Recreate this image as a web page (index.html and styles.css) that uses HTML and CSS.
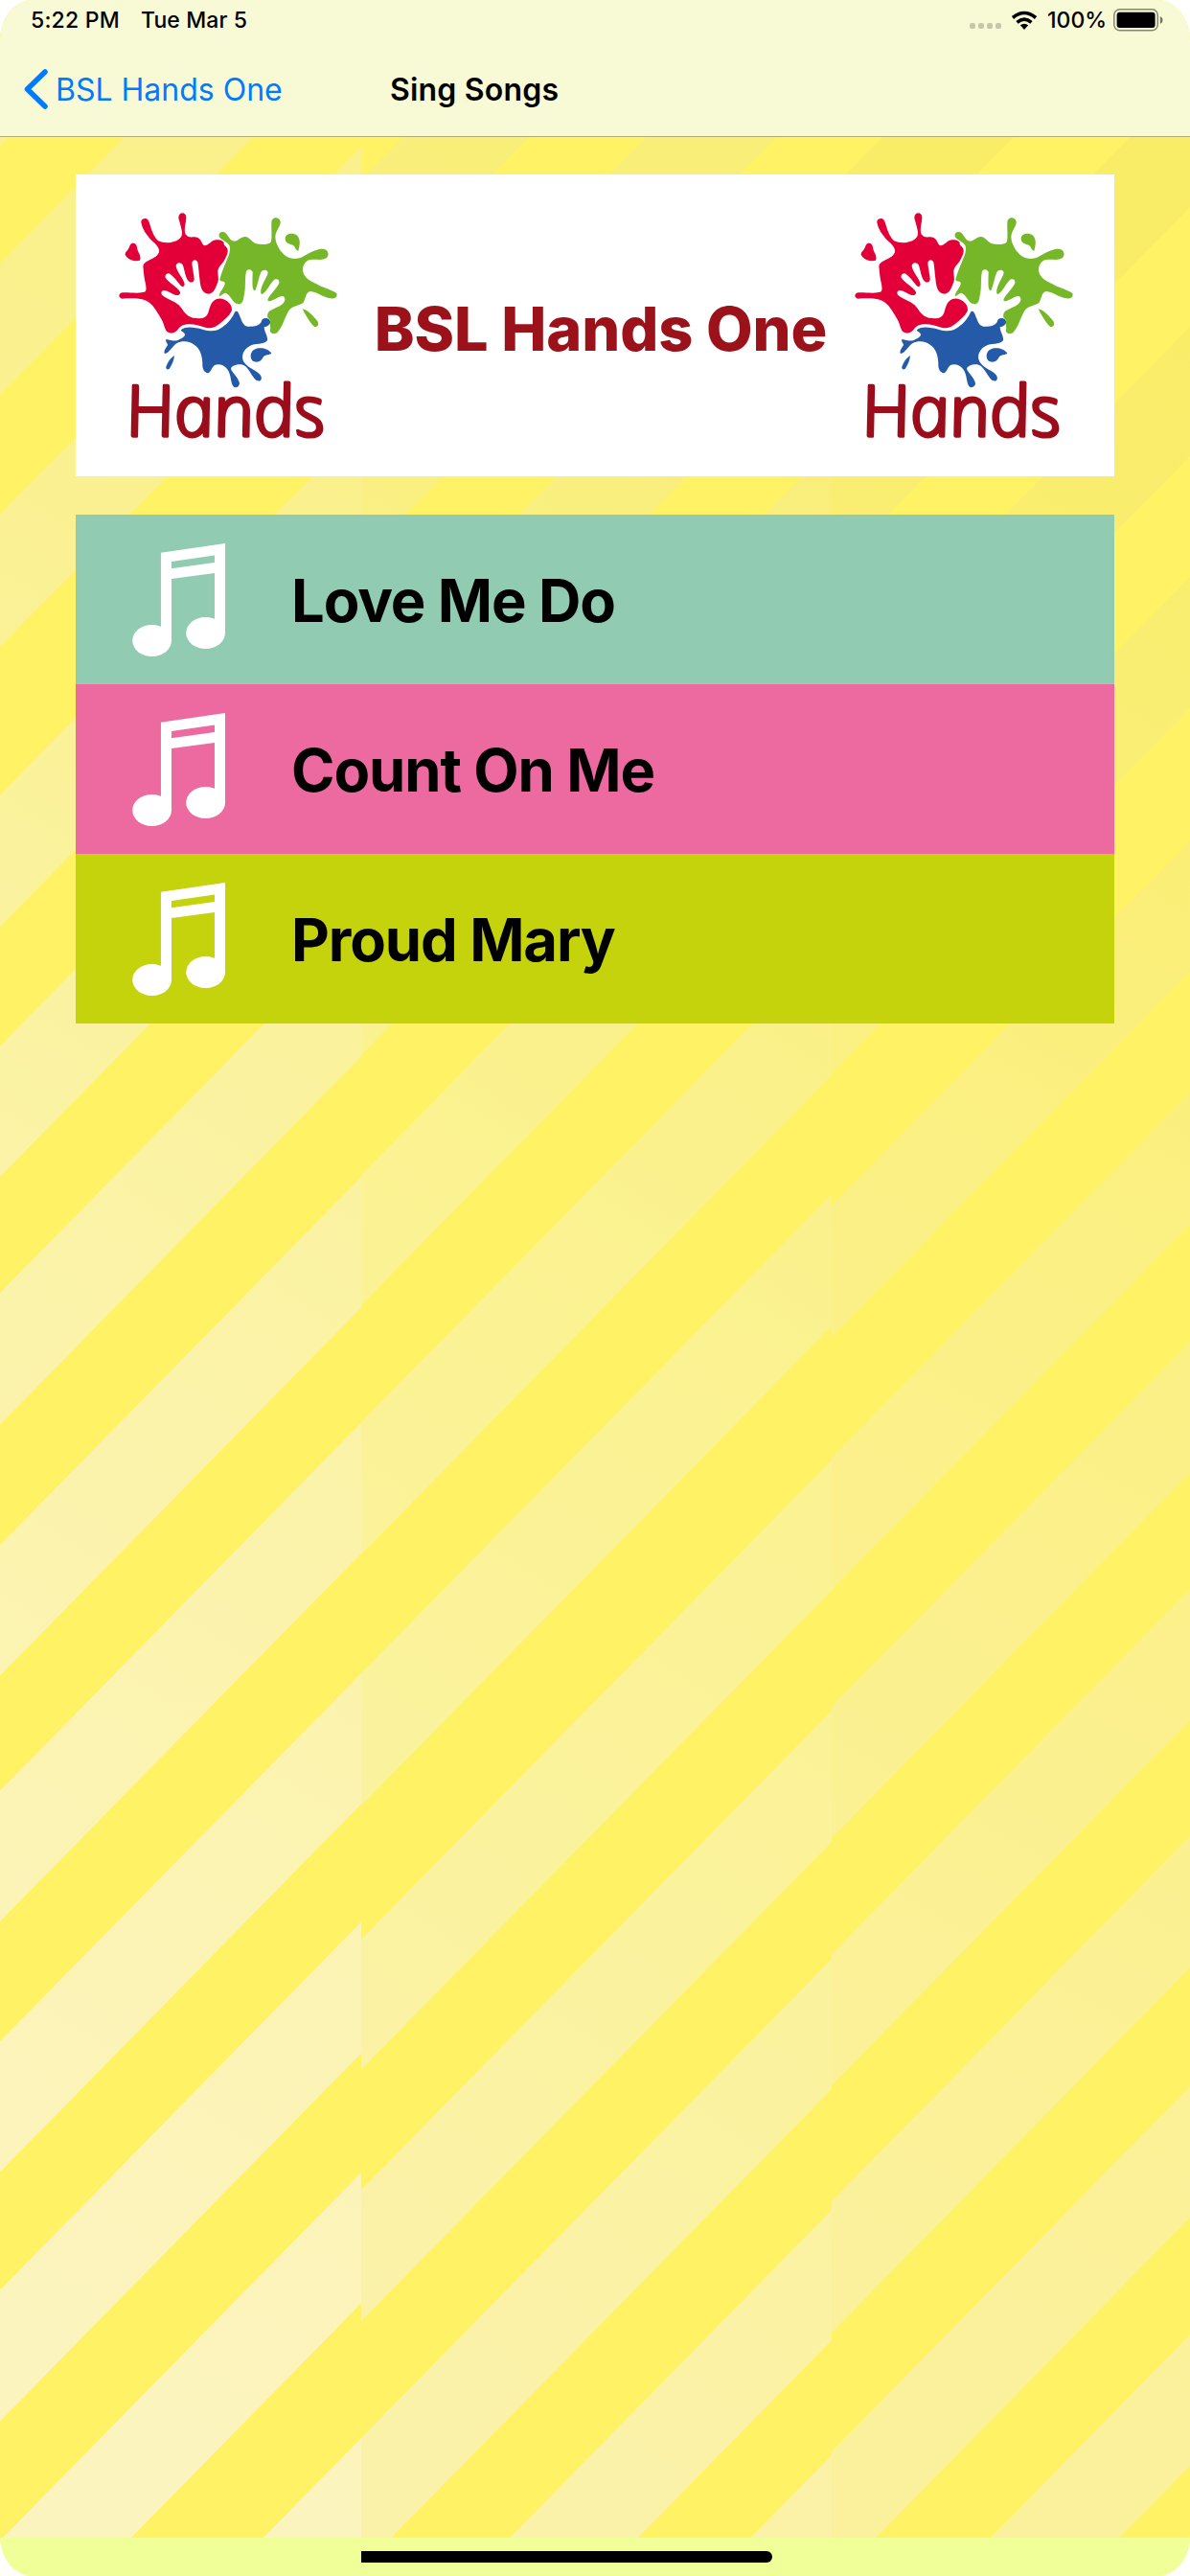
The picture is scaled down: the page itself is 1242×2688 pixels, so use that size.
FILE: index.html
```html
<!DOCTYPE html>
<html lang="en">
<head>
  <meta charset="UTF-8" />
  <meta name="viewport" content="width=device-width, initial-scale=1" />
  <title>Sing Songs</title>
  <link rel="stylesheet" href="styles.css">
</head>
<body>

  <!-- shared drawings -->
  <svg class="defs" width="0" height="0">
    <symbol id="note" viewBox="171 105 246 342" preserveAspectRatio="none">
      <path d="M247 133L417 105V376H389V195L275 212V399H247zM275 160V181L389 163V141z" fill-rule="evenodd" />
      <ellipse cx="223.3" cy="399" rx="51.7" ry="48" />
      <ellipse cx="365.3" cy="376" rx="51.7" ry="48" />
    </symbol>

    <symbol id="hands" viewBox="155 150 695 780" overflow="visible">
      <!-- red splash -->
      <path fill="#e30038" d="M231 187C229 176 244 169 252 178C262 195 262 222 284 244C306 254 338 250 352 236C366 225 356 203 348 173C346 152 374 151 372 173C371 190 362 212 372 226C382 238 398 228 408 234C422 242 420 255 429 259C446 257 449 242 467 241C478 241 486 242 490 250C488 260 500 261 502 272C503 285 497 295 489 309C481 320 470 327 471 344C472 360 475 365 469 378C463 393 458 409 442 410C421 409 416 386 414 362C411 342 411 325 408 311C404 300 391 301 390 314C391 331 397 350 397 365C394 377 383 376 376 366C368 352 366 331 361 319C354 308 340 312 340 323C342 340 366 365 367 380C365 389 359 389 354 383C344 371 333 355 321 347C312 343 304 351 307 359C314 373 345 388 353 404C354 413 347 416 337 413C326 409 315 401 304 399C294 398 292 407 296 413C306 423 335 432 348 444C362 458 363 468 379 479C393 488 420 489 431 482C447 472 440 448 458 432C474 419 490 425 502 434C512 442 517 454 514 464C506 479 490 492 476 504C462 515 448 520 433 515C409 508 390 502 368 506C354 508 349 519 340 527C330 535 315 534 309 525C302 512 301 498 293 487C280 464 267 441 247 431C226 422 192 424 171 425C158 422 160 408 172 406C191 404 225 411 244 403C252 391 239 365 239 343C237 321 233 318 252 307C266 299 282 294 287 279C288 263 277 255 265 244C247 225 235 207 231 187z" />
      <path fill="#e30038" d="M196 257C204 247 216 251 218 264C219 280 233 289 227 305C209 310 188 302 181 287C180 277 192 274 196 257z" />
      <!-- green splash -->
      <path fill="#76b72a" d="M475 229C472 219 482 213 491 217C503 222 505 239 517 244C533 249 541 230 558 231C574 235 576 247 591 253C608 257 628 256 636 249C642 239 638 213 639 188C638 168 664 167 667 184C669 197 653 211 651 230C651 253 667 280 685 292C701 303 724 302 740 292C759 281 775 271 797 269C817 268 822 288 811 298C794 309 770 297 752 306C737 315 734 332 740 348C748 364 764 371 784 381C805 393 827 397 842 407C849 418 837 427 825 424C798 421 784 404 760 402C745 406 747 426 738 438C722 449 704 446 693 463C680 485 674 513 658 530C649 538 635 534 634 525C638 518 633 508 635 497C638 487 623 491 627 473C630 461 648 457 660 450C672 444 683 434 681 424C676 407 656 424 642 430C632 436 623 433 629 424C637 409 659 389 663 376C665 363 653 360 645 368C632 382 620 409 608 411C602 406 607 389 613 377C620 361 630 348 627 340C622 332 609 334 605 345C598 362 594 391 587 400C578 399 579 379 580 343C577 331 561 331 559 344C555 369 559 392 553 415C551 434 546 444 534 442C515 438 510 409 494 407C484 408 479 422 475 415C475 406 493 387 493 377C493 367 477 375 477 364C481 350 487 334 493 319C500 300 514 276 507 258C500 246 478 241 475 229z" />
      <path fill="#76b72a" d="M682 238C680 222 704 216 718 226C730 237 729 255 723 275C714 274 714 261 706 257C694 254 683 252 682 238zM736 457C749 460 759 469 769 479C779 490 787 495 785 508C779 516 773 514 767 507C756 493 744 475 736 457z" />
      <!-- blue splash -->
      <path fill="#245aa7" d="M356 522C371 510 398 514 423 521C450 529 470 527 487 513C504 502 517 485 525 466C530 461 535 465 540 480C547 497 549 508 564 512C583 514 599 510 607 499C607 485 624 482 633 491C640 503 628 512 616 514C616 529 628 541 626 556C614 571 590 562 570 574C552 584 546 601 549 614C554 634 575 642 594 655C606 663 612 673 604 682C595 685 588 679 583 671C571 656 564 636 549 632C536 628 514 634 512 644C516 658 534 668 539 690C538 703 525 706 519 699C510 687 514 663 500 645C491 633 475 627 461 633C452 640 450 654 441 658C429 657 422 646 423 628C422 602 415 581 398 570C386 560 362 554 342 565C328 574 317 598 305 597C299 591 309 578 314 570C314 563 306 560 309 552C324 555 341 561 351 552C361 548 368 544 368 537C365 528 355 529 356 522z" />
      <path fill="#245aa7" d="M574 607C573 586 590 578 609 580C625 582 637 591 639 597C628 602 617 600 611 611C604 626 577 630 574 607zM335 603C334 618 327 632 319 645C313 648 307 645 309 638C315 622 324 609 335 603z" />
      <!-- italic has the single-storey a, so lean it back upright -->
      <text class="hands-word" transform="translate(194 854) skewX(11)" textLength="624" lengthAdjust="spacingAndGlyphs">Hands</text>
    </symbol>
  </svg>

  <div class="screen">

    <svg class="stripes" viewBox="0 0 1242 2688">
      <defs>
        <linearGradient id="g1" gradientUnits="userSpaceOnUse" x1="377" y1="500" x2="-600" y2="2000">
          <stop offset="0" stop-color="#faf08c" />
          <stop offset="0.5" stop-color="#fbf3a9" />
          <stop offset="1" stop-color="#fcf4be" />
        </linearGradient>
        <linearGradient id="g2" gradientUnits="userSpaceOnUse" x1="491" y1="400" x2="-600" y2="2000">
          <stop offset="0" stop-color="#f9ee78" />
          <stop offset="0.5" stop-color="#fbf293" />
          <stop offset="1" stop-color="#fbf2aa" />
        </linearGradient>
        <linearGradient id="g3" gradientUnits="userSpaceOnUse" x1="374" y1="300" x2="-600" y2="2000">
          <stop offset="0" stop-color="#f9ec66" />
          <stop offset="0.5" stop-color="#fbf085" />
          <stop offset="1" stop-color="#fbf19d" />
        </linearGradient>
      </defs>
      <svg x="0" y="0" width="377" height="2688" fill="url(#g1)">
        <path d="M0 15v137l377-384v-137zM0 275v137l377-384v-137zM0 537v138l377-384v-138zM0 829.500v137.500l377-384v-137.500zM0 1091.500v136.500l377-384v-136.500zM0 1349v137.500l377-384v-137.500zM0 1612v136.500l377-384v-136.500z" />
        <path d="M0 1868.500v136.500l377-384v-136.500zM0 2130v136.500l377-384v-136.500zM0 2389.500v137l377-384v-137zM0 2651v136.500l377-384v-136.500zM0 2928v137l377-384v-137z" />
      </svg>
      <svg x="377" y="0" width="491" height="2688" fill="url(#g2)">
        <path d="M0 187v135l491-500v-135zM0 446v138l491-500v-138zM0 705v138l491-500v-138zM0 965v136l491-500v-136zM0 1226v136l491-500v-136zM0 1484v138l491-500v-138zM0 1746v138l491-500v-138z" />
        <path d="M0 2023.500v136l491-500v-136zM0 2285v137l491-500v-137zM0 2544v136l491-500v-136zM0 2806v136l491-500v-136zM0 3062v136l491-500v-136z" />
      </svg>
      <svg x="868" y="0" width="374" height="2688" fill="url(#g3)">
        <path d="M0 197v139l374-381v-139zM0 460v137l374-381v-137zM0 722v135l374-381v-135zM0 983v137l374-381v-137zM0 1258v137l374-381v-137zM0 1521v138l374-381v-138zM0 1781v137l374-381v-137z" />
        <path d="M0 2039v137l374-381v-137zM0 2297v137l374-381v-137zM0 2558v137l374-381v-137zM0 2817v137l374-381v-137z" />
      </svg>
    </svg>

    <header class="top">
      <div class="status">
        <span class="time">5:22 PM</span>
        <span class="date">Tue Mar 5</span>
        <div class="signal"><i></i><i></i><i></i><i></i></div>
        <svg class="wifi" viewBox="0 0 28 20">
          <path d="M2 7.500Q14-2.500 26 7.500M6.500 12.300Q14 6 21.500 12.300" fill="none" stroke="#000" stroke-width="3.600" />
          <path d="M9.800 15.300Q14 12 18.200 15.300L14 20z" />
        </svg>
        <span class="percent">100%</span>
        <svg class="battery" viewBox="0 0 52 24">
          <rect x="0.800" y="0.800" width="45.500" height="22" rx="6" fill="none" stroke="#85866f" stroke-width="1.500" />
          <rect x="3.600" y="3.700" width="40" height="16.200" rx="3" />
          <path d="M48.800 8.300Q51.500 9 51.500 12T48.800 15.700z" fill="#777865" />
        </svg>
      </div>
      <nav class="nav">
        <a class="back" href="#">
          <svg viewBox="0 0 26 42"><path d="M22 3L3.500 21L22 39" /></svg>
          <span>BSL Hands One</span>
        </a>
        <h1>Sing Songs</h1>
      </nav>
    </header>

    <main>
      <section class="banner">
        <svg class="logo"><use href="#hands" /></svg>
        <h2>BSL Hands One</h2>
        <svg class="logo"><use href="#hands" /></svg>
      </section>

      <ul class="songs">
        <li class="song teal"><svg><use href="#note" /></svg><span>Love Me Do</span></li>
        <li class="song pink"><svg><use href="#note" /></svg><span>Count On Me</span></li>
        <li class="song lime"><svg><use href="#note" /></svg><span>Proud Mary</span></li>
      </ul>
    </main>

    <footer class="bottom">
      <div class="home"></div>
    </footer>

  </div>

</body>
</html>
```
FILE: styles.css
```css
* {
  box-sizing: border-box;
}

body {
  margin: 0;
  background: #fff;
  font-family: Inter, "Liberation Sans", sans-serif;
  color: #000;
}

.defs {
  position: absolute;
}

.screen {
  position: relative;
  display: flex;
  flex-direction: column;
  width: 1242px;
  height: 2688px;
  overflow: hidden;
  background: #fff265;
  border-radius: 34px / 42px;
}

/* striped wallpaper, sits behind everything */
.stripes {
  position: absolute;
  top: 0;
  left: 0;
  width: 1242px;
  height: 2688px;
}

.top,
main,
.bottom {
  position: relative;
}

.top {
  height: 143px;
  background: #f8fad5;
  border-bottom: 1px solid #aeae74;
}

/* status bar */
.status {
  display: flex;
  align-items: center;
  height: 41px;
  padding: 0 28px 0 32px;
  font-size: 23px;
  font-weight: 500;
  white-space: nowrap;
}

.time {
  width: 115px;
  letter-spacing: 0.2px;
}

.date {
  letter-spacing: 0.1px;
}

.signal {
  display: flex;
  gap: 3px;
  margin: 13px 10px 0 auto;
}

.signal i {
  width: 6px;
  height: 6px;
  border-radius: 2px;
  background: #c6c7aa;
}

.wifi {
  width: 28px;
  height: 20px;
  margin-right: 10px;
}

.percent {
  width: 69px;
}

.battery {
  width: 52px;
  height: 24px;
}

/* nav bar */
.nav {
  display: flex;
  align-items: center;
  height: 101px;
  padding: 3px 0 0 25px;
}

.back {
  display: flex;
  align-items: center;
  width: 382px;
  color: #007aff;
  font-size: 32px;
  text-decoration: none;
  white-space: nowrap;
}

.back svg {
  width: 26px;
  height: 42px;
  margin: -1px 7px 0 0;
  fill: none;
  stroke: #007aff;
  stroke-width: 5.5;
  stroke-linecap: round;
  stroke-linejoin: round;
}

.nav h1 {
  margin: 0;
  font-size: 32px;
  font-weight: 600;
  letter-spacing: 0.2px;
}

/* content */
main {
  flex: 1;
  padding: 39px 79px 0;
}

.banner {
  display: flex;
  align-items: center;
  height: 315px;
  padding: 0 41px 0 43px;
  background: #fff;
}

.logo {
  flex: none;
  width: 231.7px;
  height: 260px;
  margin-top: 20px;
  overflow: visible;
}

.hands-word {
  font: italic 300 220px "Open Sans", "Noto Sans", sans-serif;
  fill: #9c0d1b;
  stroke: #9c0d1b;
  stroke-width: 11;
  stroke-linejoin: round;
}

.banner h2 {
  flex: 1;
  margin: 0;
  padding: 7px 0 0 10px;
  font-size: 63px;
  font-weight: 800;
  letter-spacing: -0.1px;
  color: #9c121a;
  text-align: center;
  white-space: nowrap;
}

.songs {
  margin: 40px 0 0;
  padding: 0;
  list-style: none;
}

.song {
  display: flex;
  align-items: center;
  height: 177px;
  padding: 0 0 0 59px;
  font-size: 61.5px;
  font-weight: 700;
  letter-spacing: -1.1px;
  white-space: nowrap;
}

.song svg {
  width: 97px;
  height: 118px;
  margin: 0 69px 0 0;
  fill: #fff;
}

.song span {
  padding-top: 1px;
}

.teal { background: #91ccb2; }
.pink { background: #ed6aa0; }
.lime { background: #c5d30c; }

/* bottom safe area */
.bottom {
  height: 40px;
  padding: 14px 0 0 377px;
  background: #f1ff98;
}

.home {
  width: 429px;
  height: 12px;
  background: #000;
  border-radius: 0 6px 6px 0;
}
```
